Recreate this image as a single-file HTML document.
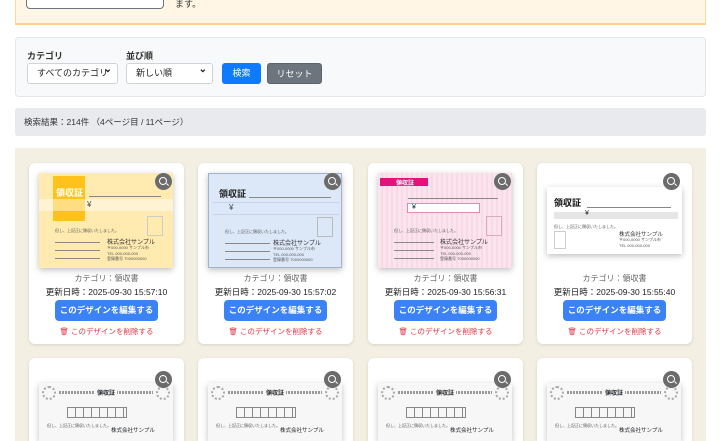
<!DOCTYPE html>
<html style="width:720px;height:441px;overflow:hidden"><head><meta charset="utf-8"><style>
*{box-sizing:border-box;margin:0;padding:0}
body{width:720px;height:441px;overflow:hidden;background:#fff;font-family:"Liberation Sans","Noto Sans CJK JP",sans-serif;position:relative;color:#212529}
.abs{position:absolute}
.notice{left:15px;top:0;width:691px;height:25px;background:#fff6e6;border:1px solid #ffd89a;border-top:none;border-bottom:2px solid #ffd08a}
.nbtn{left:26px;top:0;width:138px;height:9px;border:1px solid #6c757d;border-top:none;border-radius:0 0 4px 4px;background:#fff}
.filter{left:15px;top:37px;width:691px;height:60px;background:#f8f9fa;border:1px solid #e3e6ea;border-radius:4px}
.lbl{font-size:9px;font-weight:bold;color:#333}
.sel{height:21px;background:#fff;border:1px solid #ced4da;border-radius:3px;font-size:9px;line-height:19px;padding-left:9px}
.sel:after{content:"⌄";position:absolute;right:5px;top:-4px;font-size:10px;font-weight:bold}
.btn{height:21px;border-radius:3px;color:#fff;font-size:9px;text-align:center;line-height:21px}
.result{left:15px;top:108px;width:691px;height:28px;background:#e8eaed;border-radius:3px;font-size:8.5px;color:#333;padding:8px 9px}
.grid{left:15px;top:148px;width:691px;height:293px;background:#f3efe2}
.card{width:155px;height:181px;background:#fff;border-radius:6px;box-shadow:0 1px 3px rgba(0,0,0,.12);overflow:hidden}
.img{position:absolute;left:10px;top:10px;width:134px;height:95px;box-shadow:0 2px 6px rgba(0,0,0,.25);overflow:hidden}
.mag{position:absolute;width:17px;height:17px;border-radius:50%;background:#6b6b6b;right:1px;top:1px}
.mag:before{content:"";position:absolute;left:4px;top:4px;width:6px;height:6px;border:1.3px solid #fff;border-radius:50%}
.mag:after{content:"";position:absolute;left:11px;top:11px;width:3px;height:1.3px;background:#fff;transform:rotate(45deg)}
.cat{position:absolute;top:110px;width:100%;text-align:center;font-size:8px;color:#666}
.date{position:absolute;top:123px;width:100%;text-align:center;font-size:8.5px;color:#222}
.edit{position:absolute;left:26px;top:137px;width:103px;height:21px;background:#3b82f6;border-radius:4px;color:#fff;font-size:8.5px;font-weight:bold;text-align:center;line-height:21px}
.del{position:absolute;top:163px;width:100%;text-align:center;font-size:7.5px;color:#dc3545}
.t{position:absolute;font-size:9px;font-weight:bold}
.ln{position:absolute;height:1px;background:#888}
.sm{position:absolute;font-size:4px;color:#555;white-space:nowrap}
.r2{height:83px;border-radius:6px 6px 0 0}
.r2 .img{top:25px;height:58px;background:#f7f7f7}
</style></head><body>
<div class="abs notice"></div>
<div class="abs nbtn"></div>
<div class="abs" style="left:175px;top:0;font-size:9px;line-height:9px;color:#333">ます。</div>

<div class="abs filter"></div>
<div class="abs lbl" style="left:27px;top:49px">カテゴリ</div>
<div class="abs lbl" style="left:126px;top:49px">並び順</div>
<div class="abs sel" style="left:27px;top:63px;width:91px">すべてのカテゴリ</div>
<div class="abs sel" style="left:126px;top:63px;width:87px">新しい順</div>
<div class="abs btn" style="left:222px;top:63px;width:39px;background:#0d7bff">検索</div>
<div class="abs btn" style="left:267px;top:63px;width:55px;background:#6c757d;border:1px solid #5c636a">リセット</div>

<div class="abs result">検索結果：214件 （4ページ目 / 11ページ）</div>
<div class="abs grid"></div>

<div class="abs card" style="left:29px;top:163px">
 <div class="img" style="background:#ffeab0">
  <div style="position:absolute;left:14px;top:3px;width:32px;height:45px;background:#ffc21a"></div>
  <div style="position:absolute;left:0;top:26px;width:134px;height:12px;background:rgba(255,255,255,.45)"></div>
  <div class="t" style="left:17px;top:13px;color:#fff">領収証</div>
  <div class="ln" style="left:50px;top:23px;width:72px"></div>
  <div style="position:absolute;left:48px;top:27px;font-size:8px;color:#444">¥</div>
  <div class="sm" style="left:16px;top:55px">但し、上記正に領収いたしました。</div>
  <div style="position:absolute;left:108px;top:43px;width:16px;height:20px;border:1px solid #ccc"></div>
  <div style="position:absolute;left:68px;top:64px;font-size:6px;color:#333">株式会社サンプル</div>
  <div class="sm" style="left:68px;top:72px">〒000-0000 サンプル市<br>TEL 000-000-000<br>登録番号 T000000000</div>
  <div class="ln" style="left:16px;top:69px;width:45px"></div><div class="ln" style="left:16px;top:77px;width:45px"></div><div class="ln" style="left:16px;top:85px;width:45px"></div>
 </div>
 <div class="mag" style="left:126px;top:10px"></div>
 <div class="cat">カテゴリ：領収書</div>
 <div class="date">更新日時：2025-09-30 15:57:10</div>
 <div class="edit">このデザインを編集する</div>
 <div class="del">🗑 このデザインを削除する</div>
</div>

<div class="abs card" style="left:198px;top:163px">
 <div class="img" style="background:#dce8f8;border:1px solid #9fb3cc">
  <div class="t" style="left:10px;top:13px;color:#222">領収証</div>
  <div class="ln" style="left:40px;top:23px;width:82px"></div>
  <div class="ln" style="left:4px;top:28px;width:126px;background:#c6d4e6"></div>
  <div class="ln" style="left:4px;top:40px;width:126px;background:#c6d4e6"></div>
  <div style="position:absolute;left:20px;top:29px;font-size:8px;color:#444">¥</div>
  <div class="sm" style="left:16px;top:55px">但し、上記正に領収いたしました。</div>
  <div style="position:absolute;left:108px;top:43px;width:16px;height:20px;border:1px solid #bbb"></div>
  <div style="position:absolute;left:64px;top:64px;font-size:6px;color:#333">株式会社サンプル</div>
  <div class="sm" style="left:64px;top:72px">〒000-0000 サンプル市<br>TEL 000-000-000<br>登録番号 T000000000</div>
  <div class="ln" style="left:16px;top:69px;width:45px"></div><div class="ln" style="left:16px;top:77px;width:45px"></div><div class="ln" style="left:16px;top:85px;width:45px"></div>
 </div>
 <div class="mag" style="left:126px;top:10px"></div>
 <div class="cat">カテゴリ：領収書</div>
 <div class="date">更新日時：2025-09-30 15:57:02</div>
 <div class="edit">このデザインを編集する</div>
 <div class="del">🗑 このデザインを削除する</div>
</div>

<div class="abs card" style="left:368px;top:163px">
 <div class="img" style="background:repeating-linear-gradient(90deg,#fbe4ee 0 3px,#f8d9e6 3px 5px)">
  <div style="position:absolute;left:2px;top:5px;width:48px;height:8px;background:#e6117a"></div>
  <div style="position:absolute;left:18px;top:5px;font-size:6px;color:#fff;font-weight:bold">領収証</div>
  <div class="ln" style="left:30px;top:25px;width:90px"></div>
  <div style="position:absolute;left:29px;top:30px;width:73px;height:10px;background:#fff;border:1px solid #e48ab5;font-size:7px;padding-left:4px">¥</div>
  <div class="sm" style="left:16px;top:55px">但し、上記正に領収いたしました。</div>
  <div style="position:absolute;left:108px;top:43px;width:16px;height:20px;border:1px solid #d9aac0"></div>
  <div style="position:absolute;left:62px;top:64px;font-size:6px;color:#333">株式会社サンプル</div>
  <div class="sm" style="left:62px;top:72px">〒000-0000 サンプル市<br>TEL 000-000-000<br>登録番号 T000000000</div>
  <div class="ln" style="left:16px;top:69px;width:40px"></div><div class="ln" style="left:16px;top:77px;width:40px"></div><div class="ln" style="left:16px;top:85px;width:40px"></div>
 </div>
 <div class="mag" style="left:126px;top:10px"></div>
 <div class="cat">カテゴリ：領収書</div>
 <div class="date">更新日時：2025-09-30 15:56:31</div>
 <div class="edit">このデザインを編集する</div>
 <div class="del">🗑 このデザインを削除する</div>
</div>

<div class="abs card" style="left:537px;top:163px">
 <div class="img" style="top:24px;height:67px;background:#fff;left:10px;width:135px">
  <div class="t" style="left:7px;top:9px;color:#111">領収証</div>
  <div class="ln" style="left:40px;top:20px;width:84px"></div>
  <div style="position:absolute;left:7px;top:25px;width:124px;height:7px;background:#e6e6e6"></div>
  <div style="position:absolute;left:38px;top:23px;font-size:7px">¥</div>
  <div class="sm" style="left:7px;top:37px">但し、上記正に領収いたしました。</div>
  <div style="position:absolute;left:7px;top:44px;width:12px;height:18px;border:1px solid #ccc"></div>
  <div style="position:absolute;left:72px;top:43px;font-size:5.5px;color:#333">株式会社サンプル</div>
  <div class="sm" style="left:72px;top:50px">〒000-0000 サンプル市<br>TEL 000-000-000</div>
 </div>
 <div class="mag" style="left:126px;top:10px"></div>
 <div class="cat">カテゴリ：領収書</div>
 <div class="date">更新日時：2025-09-30 15:55:40</div>
 <div class="edit">このデザインを編集する</div>
 <div class="del">🗑 このデザインを削除する</div>
</div>

<div class="abs card r2" style="left:29px;top:358px"><div class="img"><div style="position:absolute;left:3px;top:3px;width:14px;height:14px;border-radius:50%;border:2px dotted #aaa"></div><div style="position:absolute;right:3px;top:3px;width:14px;height:14px;border-radius:50%;border:2px dotted #aaa"></div><div style="position:absolute;left:20px;top:8px;width:94px;height:3px;background:repeating-linear-gradient(90deg,#999 0 2px,transparent 2px 3px)"></div><div style="position:absolute;left:56px;top:5px;width:22px;height:9px;background:#f7f7f7;font-size:6px;font-weight:bold;text-align:center">領収証</div><div style="position:absolute;left:28px;top:24px;width:60px;height:11px;border:1px solid #888;background:repeating-linear-gradient(90deg,transparent 0 7px,#888 7px 8px)"></div><div class="sm" style="left:8px;top:40px">但し、上記正に領収いたしました。</div><div style="position:absolute;left:72px;top:43px;font-size:5.5px">株式会社サンプル</div></div><div class="mag" style="left:126px;top:13px"></div></div>
<div class="abs card r2" style="left:198px;top:358px"><div class="img"><div style="position:absolute;left:3px;top:3px;width:14px;height:14px;border-radius:50%;border:2px dotted #aaa"></div><div style="position:absolute;right:3px;top:3px;width:14px;height:14px;border-radius:50%;border:2px dotted #aaa"></div><div style="position:absolute;left:20px;top:8px;width:94px;height:3px;background:repeating-linear-gradient(90deg,#999 0 2px,transparent 2px 3px)"></div><div style="position:absolute;left:56px;top:5px;width:22px;height:9px;background:#f7f7f7;font-size:6px;font-weight:bold;text-align:center">領収証</div><div style="position:absolute;left:28px;top:24px;width:60px;height:11px;border:1px solid #888;background:repeating-linear-gradient(90deg,transparent 0 7px,#888 7px 8px)"></div><div class="sm" style="left:8px;top:40px">但し、上記正に領収いたしました。</div><div style="position:absolute;left:72px;top:43px;font-size:5.5px">株式会社サンプル</div></div><div class="mag" style="left:126px;top:13px"></div></div>
<div class="abs card r2" style="left:368px;top:358px"><div class="img"><div style="position:absolute;left:3px;top:3px;width:14px;height:14px;border-radius:50%;border:2px dotted #aaa"></div><div style="position:absolute;right:3px;top:3px;width:14px;height:14px;border-radius:50%;border:2px dotted #aaa"></div><div style="position:absolute;left:20px;top:8px;width:94px;height:3px;background:repeating-linear-gradient(90deg,#999 0 2px,transparent 2px 3px)"></div><div style="position:absolute;left:56px;top:5px;width:22px;height:9px;background:#f7f7f7;font-size:6px;font-weight:bold;text-align:center">領収証</div><div style="position:absolute;left:28px;top:24px;width:60px;height:11px;border:1px solid #888;background:repeating-linear-gradient(90deg,transparent 0 7px,#888 7px 8px)"></div><div class="sm" style="left:8px;top:40px">但し、上記正に領収いたしました。</div><div style="position:absolute;left:72px;top:43px;font-size:5.5px">株式会社サンプル</div></div><div class="mag" style="left:126px;top:13px"></div></div>
<div class="abs card r2" style="left:537px;top:358px"><div class="img"><div style="position:absolute;left:3px;top:3px;width:14px;height:14px;border-radius:50%;border:2px dotted #aaa"></div><div style="position:absolute;right:3px;top:3px;width:14px;height:14px;border-radius:50%;border:2px dotted #aaa"></div><div style="position:absolute;left:20px;top:8px;width:94px;height:3px;background:repeating-linear-gradient(90deg,#999 0 2px,transparent 2px 3px)"></div><div style="position:absolute;left:56px;top:5px;width:22px;height:9px;background:#f7f7f7;font-size:6px;font-weight:bold;text-align:center">領収証</div><div style="position:absolute;left:28px;top:24px;width:60px;height:11px;border:1px solid #888;background:repeating-linear-gradient(90deg,transparent 0 7px,#888 7px 8px)"></div><div class="sm" style="left:8px;top:40px">但し、上記正に領収いたしました。</div><div style="position:absolute;left:72px;top:43px;font-size:5.5px">株式会社サンプル</div></div><div class="mag" style="left:126px;top:13px"></div></div>
</body></html>
